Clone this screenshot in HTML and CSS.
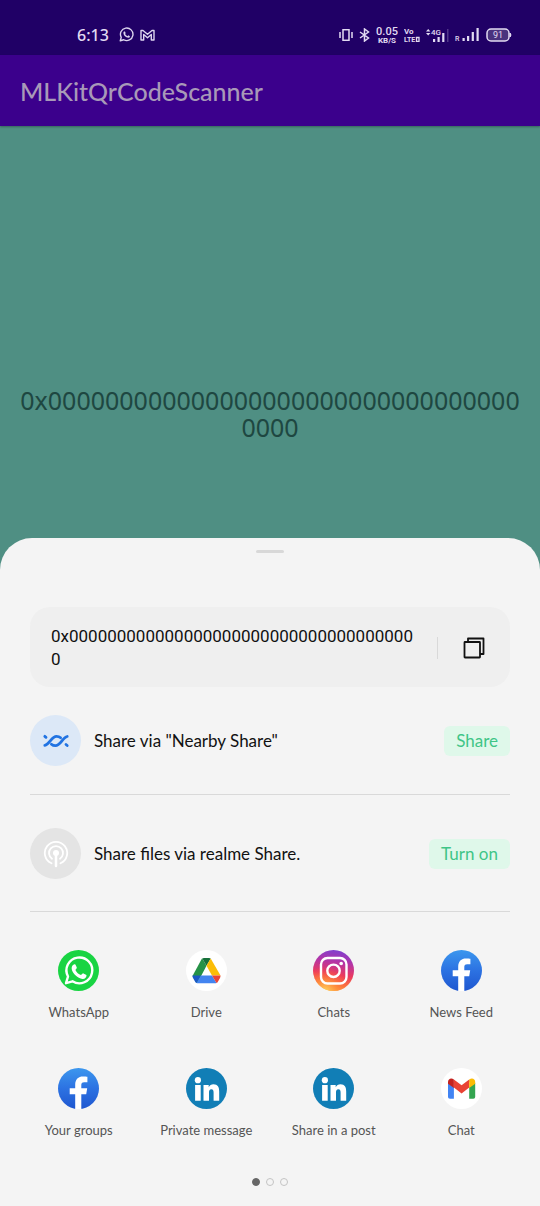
FILE: index.html
```html
<!DOCTYPE html>
<html lang="en">
<head>
<meta charset="utf-8">
<meta name="viewport" content="width=device-width, initial-scale=1">
<title>MLKitQrCodeScanner</title>
<link rel="stylesheet" href="styles.css">
</head>
<body>
<svg class="defs" aria-hidden="true">
  <defs>
    <linearGradient id="fb-blue" x1="0" y1="0" x2="0" y2="1"><stop offset="0" stop-color="#3c97ee"/><stop offset="0.5" stop-color="#2c72e2"/><stop offset="1" stop-color="#1f57d0"/></linearGradient>
    <linearGradient id="ig-base" x1="0.6" y1="0" x2="0.45" y2="1"><stop offset="0" stop-color="#7f3fd0"/><stop offset="0.3" stop-color="#b634a4"/><stop offset="0.6" stop-color="#ec3a5c"/><stop offset="0.85" stop-color="#fb7a3c"/><stop offset="1" stop-color="#fdbb4b"/></linearGradient>
    <radialGradient id="ig-glow" cx="0.3" cy="1" r="0.6"><stop offset="0" stop-color="#ffd05a"/><stop offset="0.5" stop-color="#ff8a3c" stop-opacity="0.7"/><stop offset="1" stop-color="#ff5040" stop-opacity="0"/></radialGradient>
    <symbol id="facebook" viewBox="0 0 41 41"><circle cx="20.500" cy="20.500" r="20.500" fill="url(#fb-blue)"/><path d="M17.200 40.900V26.200H11.700V20.200H17.200V16.800C17.200 11 20.400 8.400 25 8.400C27 8.400 28.700 8.600 29.400 8.700V14.200H26.200C23.900 14.200 23.300 15.300 23.300 17V20.200H29.200L28.200 26.200H23.300V40.900Z" fill="#fff"/></symbol>
    <symbol id="linkedin" viewBox="0 0 41 41"><circle cx="20.500" cy="20.500" r="20.500" fill="#117eb6"/><circle cx="11.900" cy="12.200" r="3.100" fill="#fff"/><path d="M9.100 17H14.700V32.800H9.100ZM17.500 17H22.700V19.200C23.600 17.500 25.300 16.300 27.500 16.300C31.800 16.300 33.200 19.300 33.200 23.500V32.800H27.600V24.700C27.600 22.500 27.200 21.300 25.400 21.300C23.500 21.300 23 22.600 23 24.600V32.800H17.500Z" fill="#fff"/></symbol>
  </defs>
</svg>
<div class="screen">
  <header class="status">
    <div class="status-left">
      <time class="clock">6:13</time>
      <svg width="15" height="15" viewBox="0 0 24 24" fill="none" stroke="#ddd5ef" stroke-width="2.200"><path d="M2 22L3.600 16.500A10 10 0 1 1 7.500 20.400Z" stroke-linejoin="round"/><path d="M8 7L9.600 7L10.700 9.800L9.700 11.200Q11 13.700 13.500 14.700L14.900 13.300L17.500 14.700Q17.300 17.200 15 17.300Q8 16.300 7 9.500Q7 8 8 7Z" fill="#ddd5ef" stroke="none"/></svg>
      <svg width="15" height="12" viewBox="0 0 15 12" fill="none" stroke="#ddd5ef" stroke-width="1.400" stroke-linejoin="round"><path d="M1 11V1.500H3L7.500 5.300L12 1.500H14V11H11.300V5.500L7.500 8.700L3.700 5.500V11Z"/></svg>
    </div>
    <div class="status-right">
      <svg width="14" height="12" viewBox="0 0 14 12" fill="none" stroke="#e2dbf2" stroke-width="1.500"><rect x="4" y="0.700" width="6" height="10.600"/><path d="M1 3V9M13 3V9"/></svg>
      <svg width="11" height="14" viewBox="0 0 11 14" fill="none" stroke="#e2dbf2" stroke-width="1.500"><path d="M1 4L9.500 10L5.500 13V1L9.500 4L1 10"/></svg>
      <svg width="22" height="18" viewBox="0 0 22 18" fill="#e2dbf2" text-anchor="middle"><text x="11" y="9" font-size="11" font-weight="500">0.05</text><text x="11" y="17" font-size="8" font-weight="700">KB/S</text></svg>
      <svg width="16" height="16" viewBox="0 0 16 16" fill="#e2dbf2"><text x="0" y="7" font-size="8" font-weight="700">Vo</text><text x="0" y="15" font-size="7" font-weight="700">LTE</text><path d="M12.500 10.500H15V14.300H12.500Z" fill="none" stroke="#e2dbf2" stroke-width="1.300"/></svg>
      <svg width="23" height="16" viewBox="0 0 23 16" fill="#e2dbf2"><path d="M0 4.500L2.200 2L4.400 4.500ZM0 6H4.400L2.200 8.500ZM7 12H9.200V15H7ZM11.500 10H13.700V15H11.500ZM16.200 6H18.400V15H16.200Z"/><path d="M21 2H22.500V15H21Z" opacity="0.250"/><text x="5" y="8" font-size="8" font-weight="500">4G</text></svg>
      <svg width="25" height="15" viewBox="0 0 25 15" fill="#e2dbf2"><text x="0" y="14" font-size="7" font-weight="500">R</text><path d="M7.500 11H9.700V14H7.500ZM12 9H14.200V14H12ZM16.700 5H18.900V14H16.700ZM21.500 1H23.700V14H21.500Z"/></svg>
      <svg width="26" height="14" viewBox="0 0 26 14"><rect x="1" y="1" width="22" height="12" rx="4" fill="#49327d" stroke="#e2dbf2" stroke-width="1.500"/><path d="M24 5Q26 7 24 9Z" fill="#e2dbf2" stroke="#e2dbf2"/><text x="12" y="10" font-size="9" text-anchor="middle" fill="#e2dbf2">91</text></svg>
    </div>
  </header>
  <div class="appbar"><h1>MLKitQrCodeScanner</h1></div>
  <main class="scan"><p>0x0000000000000000000000000000000000000</p></main>
  <section class="sheet" aria-label="Share">
    <div class="handle"></div>
    <div class="clip">
      <p>0x0000000000000000000000000000000000000</p>
      <button class="copy" type="button" aria-label="Copy"><svg width="22" height="22" viewBox="0 0 22 22" fill="none" stroke="#111" stroke-width="1.800"><rect x="1.500" y="5" width="15.500" height="15.500" rx="0.500"/><path d="M5 5V1.500H20.500V17H17" stroke-linejoin="round"/></svg></button>
    </div>
    <div class="option">
      <span class="badge nearby"><svg width="28" height="14" viewBox="0 0 28 14" fill="none" stroke="#2173e2" stroke-width="2.800" stroke-linecap="round"><path d="M2.800 2.300L4 3.300M2.800 11.300C7.500 10.500 9.500 2.300 14.500 2.300Q17 2.300 18.600 3.800"/><path d="M9.400 10.200Q11 11.700 13.500 11.700C18.500 11.700 20.500 3.500 25.200 2.500M24 10.500L25.200 11.500"/></svg></span>
      <span class="option-name">Share via "Nearby Share"</span>
      <button class="action" type="button">Share</button>
    </div>
    <div class="option second">
      <span class="badge realme"><svg width="26" height="28" viewBox="0 0 26 28" fill="none" stroke="#fff" stroke-width="1.800" stroke-linecap="round"><path d="M8.500 23.300A11.200 11.200 0 1 1 17.500 23.300"/><path d="M9 18.800A7 7 0 1 1 17 18.800"/><circle cx="13" cy="13" r="3" fill="#fff" stroke="none"/><path d="M13 14V26" stroke-width="2.500"/></svg></span>
      <span class="option-name">Share files via realme Share.</span>
      <button class="action" type="button">Turn on</button>
    </div>
    <div class="apps">
      <button class="app" type="button">
        <svg viewBox="0 0 41 41"><circle cx="20.500" cy="20.500" r="20.500" fill="#19d443"/><path d="M8 33.200L10 26.500A12.900 12.900 0 1 1 14.500 31.300Z" fill="none" stroke="#fff" stroke-width="2.400" stroke-linejoin="round"/><path d="M15.800 14.500C17 14 17.500 14.400 17.900 15.400L18.800 17.600C19.100 18.500 17.600 19.500 17.400 20.100C18.700 22.700 20.500 24.200 23 25.100C23.800 24.800 24.600 23.100 25.400 23.400L28.500 25C28.800 27.500 26.800 29.100 24.500 28.900C19.500 28.200 15 24 13.800 19.500C13.300 17.400 14.100 15.400 15.800 14.500Z" fill="#fff"/></svg>
        <span>WhatsApp</span></button>
      <button class="app" type="button">
        <svg viewBox="0 0 41 41"><circle cx="20.500" cy="20.500" r="20.500" fill="#fff"/><path d="M16.300 8.500L20.500 15.800L11.400 33H10.500L6.500 26L15.800 8.800Z" fill="#269247"/><path d="M16.300 8.500Q16.800 8 18 8H23Q24.200 8 24.700 8.500L20.500 15.800Z" fill="#17703a"/><path d="M24.700 8.500L34.500 25.500H26L20.500 15.800Z" fill="#fbbd07"/><path d="M6.500 25.500H15L10.500 33Q9.500 32.500 9 31.500L6.800 27.500Q6.500 27 6.500 25.500Z" fill="#1b58c5"/><path d="M15 25.500H26L30.500 33Q30 33.200 29 33.200H12Q11 33.200 10.500 33Z" fill="#4384f0"/><path d="M26 25.500H34.500Q34.500 27 34 28L32 31.500Q31.500 32.500 30.500 33Z" fill="#e94335"/></svg>
        <span>Drive</span></button>
      <button class="app" type="button">
        <svg viewBox="0 0 41 41"><circle cx="20.500" cy="20.500" r="20.500" fill="url(#ig-base)"/><circle cx="20.500" cy="20.500" r="20.500" fill="url(#ig-glow)"/><g fill="none" stroke="#fff" stroke-width="2.400"><rect x="8" y="8" width="25.500" height="25.500" rx="6.500"/><circle cx="20.500" cy="20.800" r="6.200"/></g><circle cx="28.200" cy="13.500" r="1.800" fill="#fff"/></svg>
        <span>Chats</span></button>
      <button class="app" type="button"><svg><use href="#facebook"/></svg><span>News Feed</span></button>
      <button class="app" type="button"><svg><use href="#facebook"/></svg><span>Your groups</span></button>
      <button class="app" type="button"><svg><use href="#linkedin"/></svg><span>Private message</span></button>
      <button class="app" type="button"><svg><use href="#linkedin"/></svg><span>Share in a post</span></button>
      <button class="app" type="button">
        <svg viewBox="0 0 41 41"><circle cx="20.500" cy="20.500" r="20.500" fill="#fff"/><path d="M7 15L12.900 19V30.800H9Q7 30.800 7 29Z" fill="#4284f3"/><path d="M28.200 19L34.200 15V29Q34.200 30.800 32.300 30.800H28.200Z" fill="#34a550"/><path d="M12.900 13L20.600 18.500L28.200 13V19.500L20.600 25.500L12.900 19.500Z" fill="#e94335"/><path d="M7 14C7 10.500 10.500 9.300 12.900 11.500V20L7 15.800Z" fill="#c4231f"/><path d="M34.200 14C34.200 10.500 30.700 9.300 28.200 11.500V20L34.200 15.800Z" fill="#fbbc05"/><path d="M12.900 11.500L20.600 17.300L28.200 11.500V14L20.600 19.800L12.900 14Z" fill="#e94335"/></svg>
        <span>Chat</span></button>
    </div>
    <div class="dots"><i class="on"></i><i></i><i></i></div>
  </section>
</div>
</body>
</html>
```
FILE: styles.css
```css
* { box-sizing: border-box; }
body { margin: 0; font-family: Lato, sans-serif; color: #111; background: #4f8f83; }
p, h1 { margin: 0; }
button { border: 0; padding: 0; background: none; font: inherit; color: inherit; cursor: pointer; }
svg { display: block; flex: none; }
.defs { position: absolute; width: 0; height: 0; }
.screen { min-height: 100vh; display: flex; flex-direction: column; }

.status { height: 55px; padding: 14px 28px 0 77px; display: flex; align-items: center; justify-content: space-between; background: #200066; color: #e2dbf2; font-family: Roboto, sans-serif; }
.status-left, .status-right { display: flex; align-items: center; gap: 6px; }
.clock { font: 500 16px/20px "Noto Sans", sans-serif; margin-right: 4px; }

.appbar { height: 71px; padding: 0 20px; display: flex; align-items: center; background: #3b008c; color: #a899b8; box-shadow: 0 1px 2px rgba(0, 0, 0, 0.3); }
.appbar h1 { font-size: 25px; line-height: 32px; font-weight: 500; }

.scan { flex: 1; padding: 261px 16px 96px; text-align: center; }
.scan p { font: 400 25px/27px "Noto Sans", sans-serif; color: #1e4741; overflow-wrap: anywhere; }

.sheet { background: #f4f4f4; border-radius: 32px 32px 0 0; padding: 12px 30px 20px; }
.handle { width: 28px; height: 3px; margin: 0 auto 54px; border-radius: 2px; background: #d8d8d8; }
.clip { display: flex; align-items: center; padding: 18px 0 16px 21px; border-radius: 20px; background: #efefef; }
.clip p { flex: 1; margin-right: 22px; font: 400 17px/23px Roboto, sans-serif; overflow-wrap: anywhere; }
.copy { width: 73px; height: 22px; display: flex; justify-content: center; border-left: 1px solid #d9d9d9; }

.option { display: flex; align-items: center; gap: 13px; padding: 28px 0; border-bottom: 1px solid #d9d9d9; }
.option.second { padding: 33px 0 32px; }
.badge { width: 51px; height: 51px; border-radius: 50%; display: flex; align-items: center; justify-content: center; }
.nearby { background: #dce8f7; }
.realme { background: #e4e4e4; }
.option-name { flex: 1; font-size: 17px; line-height: 22px; }
.action { padding: 4px 12px; border-radius: 6px; background: #dff8ea; color: #3fc587; font-size: 17px; line-height: 22px; }

.apps { display: grid; grid-template-columns: repeat(4, 1fr); row-gap: 47px; margin: 38px -15px 0; }
.app { display: flex; flex-direction: column; align-items: center; gap: 12px; font-size: 13px; line-height: 18px; color: #555; }
.app svg { width: 41px; height: 41px; }
.dots { display: flex; justify-content: center; gap: 6px; margin-top: 39px; }
.dots i { width: 8px; height: 8px; border: 1px solid #c4c4c4; border-radius: 50%; }
.dots .on { background: #666; border-color: #666; }
```
